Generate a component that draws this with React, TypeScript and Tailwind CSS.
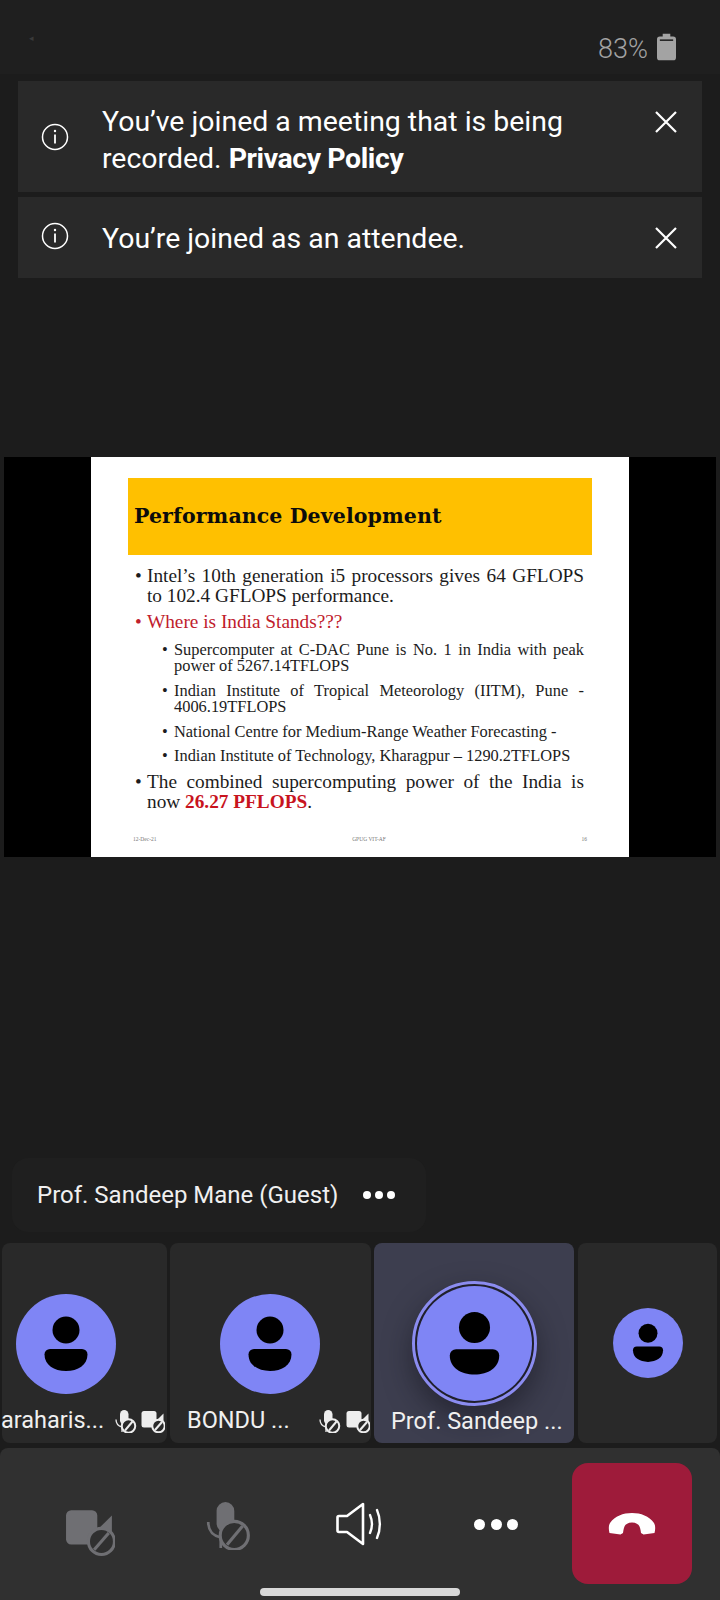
import React from 'react';

const ROBOTO = 'font-[Roboto,sans-serif]';

function InfoIcon() {
    return (
        <svg width="28" height="28" viewBox="0 0 28 28" fill="none" stroke="white" className="shrink-0">
            <circle cx="14" cy="14" r="12.5" strokeWidth="1.5" />
            <path d="M14 11.5v9" strokeWidth="1.8" />
            <circle cx="14" cy="8" r="1.2" fill="white" stroke="none" />
        </svg>
    );
}

function CloseIcon() {
    return (
        <svg width="24" height="24" viewBox="0 0 24 24" fill="none" stroke="white" strokeWidth="2.2" className="shrink-0">
            <path d="M2 2l20 20M22 2L2 22" />
        </svg>
    );
}

function Banner({ children, className }: { children: React.ReactNode; className: string }) {
    return <div className={`mx-[18px] bg-[#292929] relative ${className}`}>{children}</div>;
}

function Bullet({
    children,
    level = 1,
    red = false,
    className = '',
}: {
    children: React.ReactNode;
    level?: 1 | 2;
    red?: boolean;
    className?: string;
}) {
    const sizes = level === 1 ? 'text-[19.3px] leading-[19.5px] ml-[56px]' : 'text-[16.4px] leading-[16px] ml-[83px]';
    return (
        <div className={`flex mr-[45px] ${sizes} ${red ? 'text-[#c0202c]' : 'text-[#1c1c1c]'} ${className}`}>
            <span className="w-[12px] -ml-[12px] shrink-0">•</span>
            <p className="text-justify flex-1">{children}</p>
        </div>
    );
}

function Slide() {
    return (
        <div className="mt-[179px] mx-1 h-[400px] bg-black flex justify-center">
            <div className="w-[538px] bg-white font-['Liberation_Serif',serif] flex flex-col">
                <div className="mt-[21px] mx-[37px] h-[77px] bg-[#ffc000] flex items-center pl-[6px]">
                    <h2 className="font-['DejaVu_Serif',serif] font-bold text-[20.5px] text-[#0c0c0c] tracking-[0.1px] -mt-[1px]">
                        Performance Development
                    </h2>
                </div>
                <Bullet className="mt-[11px]">
                    Intel’s 10th generation i5 processors gives 64 GFLOPS to 102.4 GFLOPS performance.
                </Bullet>
                <Bullet red className="mt-[7px]">Where is India Stands???</Bullet>
                <Bullet level={2} className="mt-[10px]">
                    Supercomputer at C-DAC Pune is No. 1 in India with peak power of 5267.14TFLOPS
                </Bullet>
                <Bullet level={2} className="mt-[9px]">
                    Indian Institute of Tropical Meteorology (IITM), Pune - 4006.19TFLOPS
                </Bullet>
                <Bullet level={2} className="mt-[9px]">
                    National Centre for Medium-Range Weather Forecasting -
                </Bullet>
                <Bullet level={2} className="mt-[8px]">
                    Indian Institute of Technology, Kharagpur – 1290.2TFLOPS
                </Bullet>
                <Bullet className="mt-[8px] !leading-[20px]">
                    The combined supercomputing power of the India is now{' '}
                    <b className="text-[#c8141e]">26.27 PFLOPS</b>.
                </Bullet>
                <div className="mt-[23px] mx-[42px] flex justify-between items-center text-[5.5px] leading-[8px] text-[#777]">
                    <span>12-Dec-21</span>
                    <span>GPUG VIT-AF</span>
                    <span>16</span>
                </div>
            </div>
        </div>
    );
}

function Avatar({ size }: { size: number }) {
    return (
        <svg width={size} height={size} viewBox="0 0 100 100" className="block shrink-0">
            <circle cx="50" cy="50" r="50" fill="#7f85f5" />
            <circle cx="50" cy="36" r="13.5" fill="black" />
            <path d="M34 55H66a5.5 5.5 0 0 1 5.5 5.5C71.5 71 62 77 50 77S28.5 71 28.5 60.5A5.5 5.5 0 0 1 34 55Z" fill="black" />
        </svg>
    );
}

function MutedMic({ color, bg, size, ring }: { color: string; bg: string; size: number; ring?: number }) {
    return (
        <svg width={size} height={size} viewBox="0 0 48 48" fill="none" className="shrink-0">
            <rect x="14" y="2" width="17" height="29" rx="8.5" fill={color} />
            <path d="M6 21c0 9 4 13 12 15v10" stroke={color} strokeWidth="2.6" />
            <circle cx="31" cy="34" r="13.5" fill={bg} stroke={color} strokeWidth={ring ?? 3.2} />
            <path d="M24 43l15-18" stroke={color} strokeWidth={ring ?? 3.2} />
        </svg>
    );
}

function MutedCam({ color, bg, size, ring }: { color: string; bg: string; size: number; ring?: number }) {
    return (
        <svg width={size} height={size} viewBox="0 0 48 48" fill="none" className="shrink-0">
            <rect x="1" y="4" width="30" height="33" rx="5" fill={color} />
            <path d="M34 20L45 9V30H34Z" fill={color} />
            <circle cx="35" cy="34" r="12.5" fill={bg} stroke={color} strokeWidth={ring ?? 3.2} />
            <path d="M28 42l14-16" stroke={color} strokeWidth={ring ?? 3.2} />
        </svg>
    );
}

function Tiles() {
    return (
        <div className={`mt-[11px] h-[200px] flex ${ROBOTO} text-[23.5px] text-[#f0f0f0] overflow-hidden`}>
            <div className="ml-[2px] w-[165px] bg-[#292929] rounded-lg flex flex-col">
                <div className="mt-[51px] ml-[14px]"><Avatar size={100} /></div>
                <div className="mt-[9px] w-full flex items-center">
                    <span className="w-[112px] -ml-[1px]">araharis...</span>
                    <MutedMic color="#ededed" bg="#292929" size={24} ring={4} />
                    <span className="w-[4px]" />
                    <MutedCam color="#ededed" bg="#292929" size={24} ring={4} />
                </div>
            </div>
            <div className="ml-[3px] w-[201px] bg-[#292929] rounded-lg flex flex-col items-center">
                <div className="mt-[51px] mr-[1px]"><Avatar size={100} /></div>
                <div className="mt-[9px] w-full flex items-center pl-[17px]">
                    <span className="w-[130px]">BONDU ...</span>
                    <MutedMic color="#ededed" bg="#292929" size={24} ring={4} />
                    <span className="w-[5px]" />
                    <MutedCam color="#ededed" bg="#292929" size={24} ring={4} />
                </div>
            </div>
            <div className="ml-[3px] w-[200px] bg-[#3d3e4f] rounded-lg flex flex-col items-center">
                <div className="mt-[38px] w-[125px] h-[125px] rounded-full border-[3px] border-[#8b8cf0] p-[2px] bg-[#20202c] shadow-[0_12px_28px_rgba(20,20,30,0.55)] flex">
                    <Avatar size={115} />
                </div>
                <span className="-mt-[2px] block w-full pl-[17px] whitespace-nowrap">Prof. Sandeep ...</span>
            </div>
            <div className="ml-[4px] w-[139px] bg-[#292929] rounded-lg flex items-center justify-center">
                <Avatar size={70} />
            </div>
        </div>
    );
}

function Controls() {
    return (
        <div className="mt-[5px] h-[152px] bg-[#303030] rounded-t-lg relative flex">
            <div className="ml-[65px] mt-[58px]">
                <MutedCam color="#6f6f73" bg="#303030" size={50} ring={3} />
            </div>
            <div className="ml-[87px] mt-[52px]">
                <MutedMic color="#6f6f73" bg="#303030" size={50} ring={3} />
            </div>
            <svg width="48" height="44" viewBox="0 0 48 44" fill="none" stroke="white" className="ml-[84px] mt-[54px]">
                <path d="M3 14h8L27 2v40L11 30H3a1.5 1.5 0 0 1-1.5-1.5v-13A1.5 1.5 0 0 1 3 14Z" strokeWidth="2.6" strokeLinejoin="round" />
                <path d="M34 13c2.4 5.5 2.4 12.5 0 18" strokeWidth="2.4" strokeLinecap="round" />
                <path d="M41 8c3.8 8.5 3.8 19.5 0 28" strokeWidth="2.4" strokeLinecap="round" />
            </svg>
            <div className="ml-[90px] mt-[71px] flex gap-[5.5px] h-[11px]">
                <span className="w-[11px] h-[11px] rounded-full bg-white" />
                <span className="w-[11px] h-[11px] rounded-full bg-white" />
                <span className="w-[11px] h-[11px] rounded-full bg-white" />
            </div>
            <div className="absolute left-[572px] top-[15px] w-[120px] h-[121px] rounded-2xl bg-[#9e1b3a] flex items-center justify-center">
                <svg width="48" height="22" viewBox="0 0 48 22" fill="white">
                    <path d="M2 10C7 3 15 0 24 0s17 3 22 10c1.5 2.5 1.5 6 .5 10l-11 1.5-2.5-1.5c-.5-4-1-5-1.5-6.5-.5-1.5-3-4-7.5-4s-7 2.5-7.5 4c-.5 1.5-1 2.5-1.5 6.5l-2.5 1.5-11-1.5c-1-4-1-7.5.5-10Z" />
                </svg>
            </div>
            <div className="absolute left-[260px] top-[140px] w-[200px] h-[8px] rounded-full bg-[#d8d8d8]" />
        </div>
    );
}

export default function App() {
    return (
        <div className={`w-[720px] h-[1600px] overflow-hidden bg-[#1c1c1c] ${ROBOTO}`}>
            {/* 状态栏 */}
            <div className="h-[74px] bg-[#1f1f1f] flex items-start justify-end pr-[44px] pt-[33px] relative">
                <span className="absolute left-[29px] top-[32px] text-[9px] text-[#3a3a3a]">◂</span>
                <span className="text-[27px] leading-[30px] font-light text-[#a3a3a3] mr-[9px] mt-[1px]">83%</span>
                <svg width="19" height="28" viewBox="0 0 20 28" fill="#a3a3a3">
                    <path d="M6 0h8v3h3a3 3 0 0 1 3 3v19a3 3 0 0 1-3 3H3a3 3 0 0 1-3-3V6a3 3 0 0 1 3-3h3Z" />
                    <rect x="3" y="6" width="14" height="1.6" fill="#1f1f1f" />
                </svg>
            </div>

            <Banner className="mt-[7px] h-[111px] flex items-center text-white text-[28.45px] leading-[36.5px]">
                <div className="ml-[23px] mt-[1px]"><InfoIcon /></div>
                <p className="ml-[33px] w-[500px] mt-[8px]">
                    You’ve joined a meeting that is being recorded. <b className="font-bold tracking-[-0.4px]">Privacy Policy</b>
                </p>
                <div className="absolute right-[24px] top-[29px]"><CloseIcon /></div>
            </Banner>
            <Banner className="mt-[5px] h-[81px] flex items-center text-white text-[28.45px] leading-[37px]">
                <div className="ml-[23px] -mt-[4px]"><InfoIcon /></div>
                <p className="ml-[33px] mt-[2px]">You’re joined as an attendee.</p>
                <div className="absolute right-[24px] top-[29px]"><CloseIcon /></div>
            </Banner>

            <Slide />

            <div className="mt-[301px] ml-[12px] w-[414px] h-[74px] bg-[#1f1f1f] rounded-2xl flex items-center pl-[25px]">
                <span className="text-[24px] text-[#f0f0f0]">Prof. Sandeep Mane (Guest)</span>
                <div className="ml-[25px] flex gap-[4px]">
                    <span className="w-[8px] h-[8px] rounded-full bg-white" />
                    <span className="w-[8px] h-[8px] rounded-full bg-white" />
                    <span className="w-[8px] h-[8px] rounded-full bg-white" />
                </div>
            </div>

            <Tiles />
            <Controls />
        </div>
    );
}
